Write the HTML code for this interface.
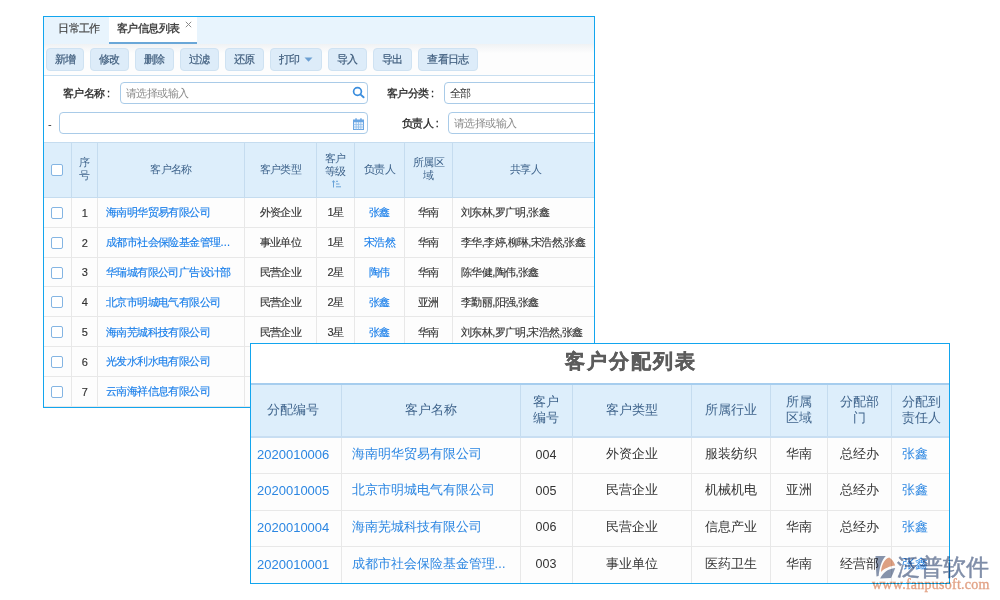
<!DOCTYPE html>
<html><head><meta charset="utf-8">
<style>
*{box-sizing:border-box;margin:0;padding:0}
html,body{width:1000px;height:600px;overflow:hidden;background:#fff;font-family:"Liberation Sans",sans-serif;color:#333}
.abs{position:absolute}
#p1{position:absolute;left:43px;top:16px;width:552px;height:392px;border:1px solid #12a5ee;background:#fff;overflow:hidden;letter-spacing:-0.6px}
#tabs{position:absolute;left:0;top:0;width:100%;height:27px;background:#e8f4fd}
.tab{position:absolute;top:0;height:27px;line-height:22px;font-size:11px}
#toolbar{position:absolute;left:0;top:27px;width:100%;height:32px;background:linear-gradient(#f0f2f4,#fdfdfd 30%);border-bottom:1px solid #c9dff0}
.btn{position:absolute;top:4px;height:23px;border:1px solid #cfe2f2;background:#ddecf9;border-radius:4px;font-size:11px;line-height:20px;text-align:center;color:#3f5d7d;-webkit-text-stroke:0.2px #3f5d7d}
.lbl{position:absolute;font-size:11px;color:#333;line-height:12px}
.inp{position:absolute;height:22px;border:1px solid #a9cbe8;border-radius:4px;background:#fff;font-size:11px;line-height:20px;padding-left:5px}
table{border-collapse:collapse;table-layout:fixed}
#t1{position:absolute;left:-1px;top:125px;width:556px}
#t1 td{-webkit-text-stroke:0.15px currentColor;border:1px solid #e8e8e8;background:#fdfdfd;font-size:11px;text-align:center;height:29.8px;padding-top:1px;overflow:hidden;white-space:nowrap}
#t1 td.c{padding:0 1px 0 0}
#t1 th{border:1px solid #c5dcef;background:#ddeefb;padding-bottom:2px;font-weight:normal;font-size:11px;color:#3f648c;line-height:12.7px}
.lnk{color:#1a7fea}
.cb{display:inline-block;width:12px;height:12px;border:1.3px solid #84b5e3;border-radius:2px;background:#fff;vertical-align:middle}
#p2{position:absolute;left:250px;top:343px;width:700px;height:241px;border:1px solid #12a5ee;background:#fff;overflow:hidden}
#t2{position:absolute;left:-1px;top:39px;width:701px}
#t2 th{border:1px solid #c5dcef;background:#ddeefb;padding-bottom:2px;font-weight:normal;font-size:12.5px;color:#3f648c;line-height:16px;height:53px}
#t2 tr:first-child th{border-top:2px solid #a6cdee;border-bottom:2px solid #c8def2}
#t2 td.lnk{color:#2b86e2}
#t2 td{border:1px solid #e8e8e8;background:#fdfdfd;font-size:12.5px;text-align:center;height:36.6px;padding-bottom:2px;white-space:nowrap;overflow:hidden}
</style></head><body>

<div id="p1">
  <div id="tabs">
    <div class="tab" style="left:0;width:70px;text-align:center;color:#444;-webkit-text-stroke:0.2px #444">日常工作</div>
    <div class="tab" style="left:65px;width:88px;background:#fff;border-bottom:2px solid #6aa7d8;font-weight:bold;color:#484848;padding-left:8px;font-size:11px">客户信息列表</div>
    <svg class="abs" style="left:141px;top:4px" width="7" height="7" viewBox="0 0 7 7"><path d="M0.8 0.8L6.2 6.2M6.2 0.8L0.8 6.2" stroke="#8a8a8a" stroke-width="1"/></svg>
  </div>
  <div id="toolbar">
    <div class="btn" style="left:2px;width:38px">新增</div>
    <div class="btn" style="left:46px;width:39px">修改</div>
    <div class="btn" style="left:91px;width:39px">删除</div>
    <div class="btn" style="left:136px;width:39px">过滤</div>
    <div class="btn" style="left:181px;width:39px">还原</div>
    <div class="btn" style="left:226px;width:52px">打印<svg width="9" height="5" viewBox="0 0 9 5" style="margin-left:5px;vertical-align:1px"><path d="M0.5 0.5H8.5L4.5 4.8Z" fill="#6c9fd2"/></svg></div>
    <div class="btn" style="left:284px;width:39px">导入</div>
    <div class="btn" style="left:329px;width:39px">导出</div>
    <div class="btn" style="left:374px;width:60px">查看日志</div>
  </div>
  <div class="lbl" style="left:19px;top:70px;font-weight:normal;color:#2a2a2a;-webkit-text-stroke:0.3px #2a2a2a">客户名称<span style="margin-left:2.5px">:</span></div>
  <div class="inp" style="left:76px;top:65px;width:248px;color:#8a8a8a">请选择或输入</div>
  <svg class="abs" style="left:308px;top:69px;z-index:2" width="14" height="14" viewBox="0 0 14 14"><circle cx="5.5" cy="5.5" r="3.9" fill="none" stroke="#3b8ede" stroke-width="1.7"/><line x1="8.4" y1="8.4" x2="11.6" y2="11.3" stroke="#3b8ede" stroke-width="1.9" stroke-linecap="round"/></svg>
  <svg class="abs" style="left:309px;top:101px;z-index:2" width="11" height="12" viewBox="0 0 11 12"><rect x="0.5" y="2" width="10" height="9.5" fill="#eaf3fc" stroke="#6aa6e3" stroke-width="1"/><rect x="0.5" y="2" width="10" height="2.2" fill="#6aa6e3"/><rect x="2.3" y="0.3" width="1.5" height="3" fill="#6aa6e3"/><rect x="7.2" y="0.3" width="1.5" height="3" fill="#6aa6e3"/><path d="M3.2 4v7.5M5.5 4v7.5M7.8 4v7.5M0.5 6.6h10M0.5 9h10" stroke="#8fbdea" stroke-width="0.8"/></svg>
  <div class="lbl" style="left:343px;top:70px;font-weight:normal;color:#2a2a2a;-webkit-text-stroke:0.3px #2a2a2a">客户分类<span style="margin-left:2.5px">:</span></div>
  <div class="inp" style="left:400px;top:65px;width:200px;color:#333">全部</div>
  <div class="lbl" style="left:4px;top:101px">-</div>
  <div class="inp" style="left:15px;top:95px;width:309px"></div>
  <div class="lbl" style="left:358px;top:100px;font-weight:normal;color:#2a2a2a;-webkit-text-stroke:0.3px #2a2a2a">负责人<span style="margin-left:2.5px">:</span></div>
  <div class="inp" style="left:404px;top:95px;width:200px;color:#8a8a8a">请选择或输入</div>

  <table id="t1">
    <colgroup><col style="width:28px"><col style="width:26px"><col style="width:147px"><col style="width:72px"><col style="width:38px"><col style="width:50px"><col style="width:48px"><col style="width:146px"></colgroup>
    <tr style="height:55px"><th style="padding:0 2px 1px 0"><span class="cb"></span></th><th>序<br>号</th><th>客户名称</th><th>客户类型</th><th style="padding:2px 0 0 0">客户<br>等级<br><svg width="10" height="8" viewBox="0 0 10 8" style="vertical-align:top;margin-top:2.5px;margin-left:3px"><path d="M1.5 7.5V1M0.2 2.4L1.5 0.6L2.8 2.4" fill="none" stroke="#6aa3d8" stroke-width="1"/><path d="M4 1.3h2M4 4h3.5M4 6.8h5" stroke="#6aa3d8" stroke-width="1"/></svg></th><th>负责人</th><th>所属区<br>域</th><th>共享人</th></tr>
    <tr><td class="c"><span class="cb"></span></td><td>1</td><td class="lnk" style="text-align:left;padding-left:8px">海南明华贸易有限公司</td><td>外资企业</td><td>1星</td><td class="lnk">张鑫</td><td>华南</td><td style="text-align:left;padding-left:8px">刘东林,罗广明,张鑫</td></tr>
    <tr><td class="c"><span class="cb"></span></td><td>2</td><td class="lnk" style="text-align:left;padding-left:8px">成都市社会保险基金管理<span style="letter-spacing:0.3px">...</span></td><td>事业单位</td><td>1星</td><td class="lnk">宋浩然</td><td>华南</td><td style="text-align:left;padding-left:8px">李华,李婷,柳琳,宋浩然,张鑫</td></tr>
    <tr><td class="c"><span class="cb"></span></td><td>3</td><td class="lnk" style="text-align:left;padding-left:8px">华瑞城有限公司广告设计部</td><td>民营企业</td><td>2星</td><td class="lnk">陶伟</td><td>华南</td><td style="text-align:left;padding-left:8px">陈华健,陶伟,张鑫</td></tr>
    <tr><td class="c"><span class="cb"></span></td><td>4</td><td class="lnk" style="text-align:left;padding-left:8px">北京市明城电气有限公司</td><td>民营企业</td><td>2星</td><td class="lnk">张鑫</td><td>亚洲</td><td style="text-align:left;padding-left:8px">李勤丽,阳强,张鑫</td></tr>
    <tr><td class="c"><span class="cb"></span></td><td>5</td><td class="lnk" style="text-align:left;padding-left:8px">海南芜城科技有限公司</td><td>民营企业</td><td>3星</td><td class="lnk">张鑫</td><td>华南</td><td style="text-align:left;padding-left:8px">刘东林,罗广明,宋浩然,张鑫</td></tr>
    <tr><td class="c"><span class="cb"></span></td><td>6</td><td class="lnk" style="text-align:left;padding-left:8px">光发水利水电有限公司</td><td></td><td></td><td></td><td></td><td></td></tr>
    <tr><td class="c"><span class="cb"></span></td><td>7</td><td class="lnk" style="text-align:left;padding-left:8px">云南海祥信息有限公司</td><td></td><td></td><td></td><td></td><td></td></tr>
  </table>
</div>

<div id="p2">
  <div class="abs" style="left:314px;top:-1px;height:39px;font-size:20px;letter-spacing:2px;font-weight:bold;color:#5c5c5c;-webkit-text-stroke:0.4px #5c5c5c;line-height:37px">客户分配列表</div>
  <table id="t2">
    <colgroup><col style="width:90.5px"><col style="width:179px"><col style="width:52px"><col style="width:119.5px"><col style="width:79px"><col style="width:57px"><col style="width:64px"><col style="width:60px"></colgroup>
    <tr><th style="padding-right:5px">分配编号</th><th>客户名称</th><th>客户<br>编号</th><th>客户类型</th><th>所属行业</th><th>所属<br>区域</th><th>分配部<br>门</th><th>分配到<br>责任人</th></tr>
    <tr><td class="lnk" style="text-align:left;padding-left:6px;font-size:13px">2020010006</td><td class="lnk" style="text-align:left;padding-left:10px">海南明华贸易有限公司</td><td>004</td><td>外资企业</td><td>服装纺织</td><td>华南</td><td>总经办</td><td class="lnk" style="text-align:left;padding-left:9.5px">张鑫</td></tr>
    <tr><td class="lnk" style="text-align:left;padding-left:6px;font-size:13px">2020010005</td><td class="lnk" style="text-align:left;padding-left:10px">北京市明城电气有限公司</td><td>005</td><td>民营企业</td><td>机械机电</td><td>亚洲</td><td>总经办</td><td class="lnk" style="text-align:left;padding-left:9.5px">张鑫</td></tr>
    <tr><td class="lnk" style="text-align:left;padding-left:6px;font-size:13px">2020010004</td><td class="lnk" style="text-align:left;padding-left:10px">海南芜城科技有限公司</td><td>006</td><td>民营企业</td><td>信息产业</td><td>华南</td><td>总经办</td><td class="lnk" style="text-align:left;padding-left:9.5px">张鑫</td></tr>
    <tr><td class="lnk" style="text-align:left;padding-left:6px;font-size:13px">2020010001</td><td class="lnk" style="text-align:left;padding-left:10px">成都市社会保险基金管理<span style="letter-spacing:0.3px">...</span></td><td>003</td><td>事业单位</td><td>医药卫生</td><td>华南</td><td>经营部</td><td class="lnk" style="text-align:left;padding-left:9.5px">张鑫</td></tr>
  </table>
</div>

<div class="abs" style="left:866px;top:550px;width:130px;height:45px;mix-blend-mode:multiply">
  <svg class="abs" style="left:0;top:0" width="40" height="32" viewBox="0 0 40 32"><path d="M9.5,6 L19.8,6 C15.5,10 13.5,18 12.6,26 L10.5,26.5 C10,18 9.5,11 9.5,6 Z" fill="#8794ad"/><path d="M15,22 C15.5,14 19,8.5 23.3,7.5 C26,9 28,12 29.2,15.5 C24,16 18,18.5 15,22 Z" fill="#dfa183"/><path d="M14.2,28.5 C17,22.5 22,18.8 29.2,18 C27.5,22.5 26,26 25,28 Z" fill="#8794ad"/></svg>
  <div class="abs" style="left:31px;top:4px;font-size:22.5px;font-weight:normal;-webkit-text-stroke:0.5px #7f8da8;color:#7f8da8;line-height:28px;white-space:nowrap">泛普软件</div>
  <div class="abs" style="left:6px;top:28px;font-family:'Liberation Serif',serif;font-size:14px;color:#e2a387;line-height:14px;white-space:nowrap;letter-spacing:0.25px;-webkit-text-stroke:0.35px #e2a387">www.fanpusoft.com</div>
</div>
</body></html>
